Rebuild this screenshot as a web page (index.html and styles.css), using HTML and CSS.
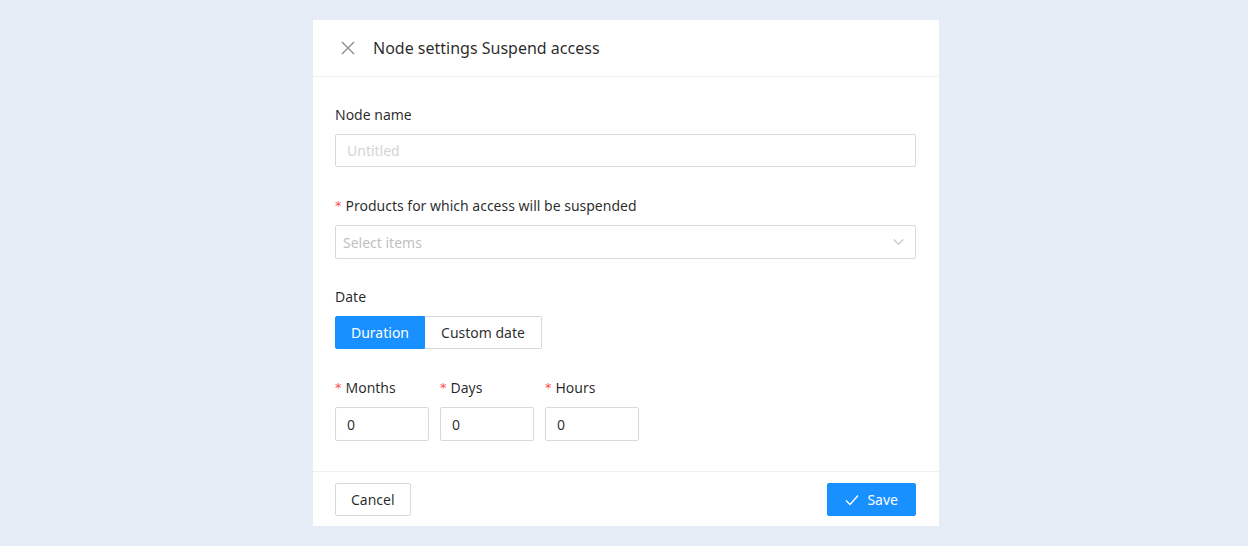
FILE: index.html
```html
<!DOCTYPE html>
<html lang="en">
<head>
<meta charset="utf-8">
<title>Node settings</title>
<link rel="stylesheet" href="styles.css">
</head>
<body>
<div class="page">
  <div class="modal">
    <div class="modal-header">
      <svg class="close" width="14" height="14" viewBox="0 0 14 14"><path d="M1 1L13 13M13 1L1 13" stroke="#8c8c8c" stroke-width="1.3" fill="none"/></svg>
      <div class="title">Node settings Suspend access</div>
    </div>
    <div class="modal-body">
      <div class="field f1">
        <div class="label">Node name</div>
        <div class="input"><span class="placeholder">Untitled</span></div>
      </div>
      <div class="field f2">
        <div class="label"><span class="req">*</span>Products for which access will be suspended</div>
        <div class="select"><span class="placeholder">Select items</span>
          <svg class="chev" width="11" height="8" viewBox="0 0 11 8"><path d="M0.8 1.5L5.5 6.3L10.2 1.5" stroke="#bfbfbf" stroke-width="1.1" fill="none"/></svg>
        </div>
      </div>
      <div class="field f3">
        <div class="label">Date</div>
        <div class="radio-group">
          <div class="radio active">Duration</div>
          <div class="radio">Custom date</div>
        </div>
      </div>
      <div class="field row">
        <div class="col">
          <div class="label"><span class="req">*</span>Months</div>
          <div class="input small">0</div>
        </div>
        <div class="col">
          <div class="label"><span class="req">*</span>Days</div>
          <div class="input small">0</div>
        </div>
        <div class="col">
          <div class="label"><span class="req">*</span>Hours</div>
          <div class="input small">0</div>
        </div>
      </div>
    </div>
    <div class="modal-footer">
      <div class="btn">Cancel</div>
      <div class="btn primary"><svg width="14" height="12" viewBox="0 0 14 12"><path d="M1 6.5L5 10.5L13 1.5" stroke="#fff" stroke-width="1.3" fill="none"/></svg>Save</div>
    </div>
  </div>
</div>
</body>
</html>
```
FILE: styles.css
```css
html, body { margin: 0; padding: 0; }
body {
  background: #e6edf7;
  font-family: "Noto Sans", "Open Sans", sans-serif;
  font-size: 14px;
  color: rgba(0,0,0,0.85);
  width: 1248px;
  height: 546px;
  overflow: hidden;
}
.page { display: flex; justify-content: center; padding: 20px 0 0 4px; }
.modal { width: 626px; height: 506px; background: #fff; display: flex; flex-direction: column; }
.modal-header {
  height: 57px; flex: none; box-sizing: border-box; border-bottom: 1px solid #f0f0f0;
  display: flex; align-items: center; padding-left: 28px;
}
.close { margin-right: 18px; }
.title { font-size: 16px; color: rgba(0,0,0,0.85); }
.modal-body { box-sizing: border-box; padding: 27px 23px 0 22px; flex: 1; border-bottom: 1px solid #f0f0f0; }
.field { margin-bottom: 28px; }
.field.f1 { margin-bottom: 28px; }
.field.f2 { margin-bottom: 27px; }
.label { height: 22px; line-height: 22px; margin-bottom: 8px; white-space: nowrap; }
.req { color: #ff4d4f; margin-right: 4px; font-family: "DejaVu Sans", sans-serif; font-size: 13px; line-height: 22px; display: inline-block; vertical-align: top; }
.input, .select {
  box-sizing: border-box; height: 33px; border: 1px solid #d9d9d9; border-radius: 2px;
  padding: 0 11px; display: flex; align-items: center;
}
.select { height: 34px; padding: 0 11px 0 7px; justify-content: space-between; }
.placeholder { color: #bfbfbf; }
.input .placeholder { color: #d4d4d4; }
.radio-group { display: flex; }
.radio {
  height: 33px; box-sizing: border-box; border: 1px solid #d9d9d9; padding: 0 16px;
  display: flex; align-items: center; border-radius: 0 2px 2px 0; border-left: 0;
}
.radio.active { background: #1890ff; border-color: #1890ff; color: #fff; border-radius: 2px 0 0 2px; border-left: 1px solid #1890ff; padding: 0 15px; }
.row { display: flex; gap: 11px; }
.input.small { width: 94px; height: 34px; }
.modal-footer {
  flex: none; box-sizing: border-box; height: 54px;
  display: flex; justify-content: space-between; align-items: flex-start;
  padding: 11px 23px 0 22px;
}
.btn {
  height: 33px; box-sizing: border-box; border: 1px solid #d9d9d9; border-radius: 2px;
  padding: 0 15px; display: flex; align-items: center; gap: 8px;
}
.btn.primary { background: #1890ff; border-color: #1890ff; color: #fff; padding: 0 17px; }
```
